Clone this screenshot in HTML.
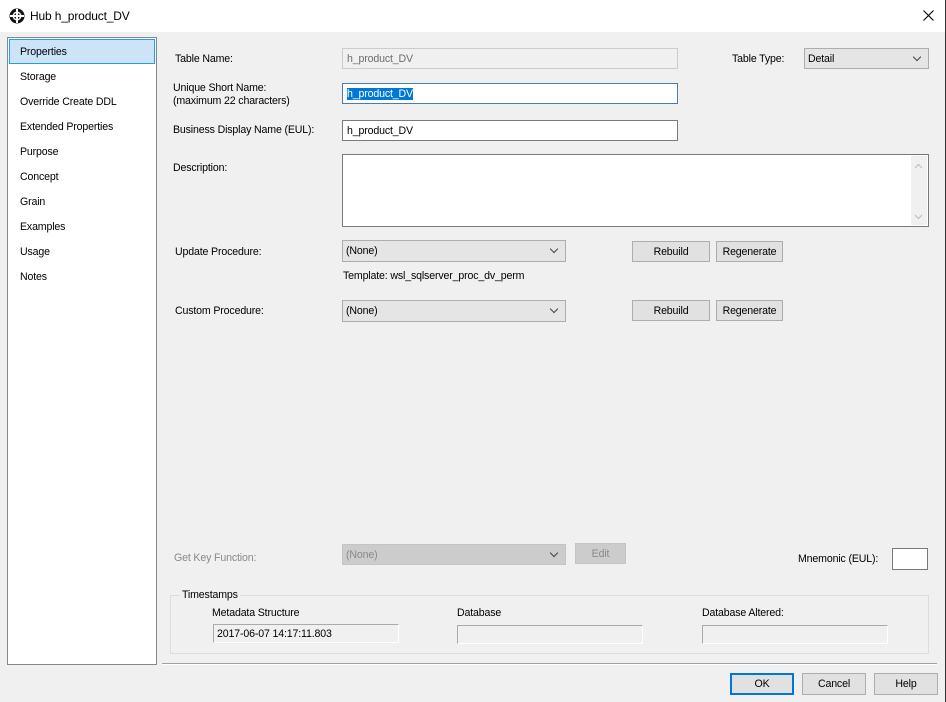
<!DOCTYPE html>
<html><head><meta charset="utf-8"><style>
*{box-sizing:border-box;margin:0;padding:0}
body{width:946px;height:702px;overflow:hidden;background:#f0f0f0;font-family:"Liberation Sans",sans-serif;font-size:10.6px;letter-spacing:-0.15px;color:#000;position:relative}
.a{position:absolute;white-space:nowrap}
.tb{position:absolute;left:0;top:0;width:946px;height:32px;background:#fff}
.in{position:absolute;background:#fff;border:1px solid #7a7a7a;padding:4px 4px 2px;line-height:13px}
.dis{background:#f0f0f0;border-color:#ccc;color:#6d6d6d}
.cb{position:absolute;background:#e5e5e5;border:1px solid #adadad;padding:4px 3px 2px;line-height:13px}
.cb:after{content:"";position:absolute;right:8px;top:5px;width:5px;height:5px;border-right:1px solid #444;border-bottom:1px solid #444;transform:rotate(45deg)}
.btn{position:absolute;background:#e1e1e1;border:1px solid #adadad;text-align:center;line-height:20px}
</style></head><body>
<div class="tb"></div>
<div class="a" style="right:0;top:0;width:1px;height:702px;background:#333"></div>
<svg class="a" style="left:9px;top:8px" width="16" height="16" viewBox="0 0 16 16"><circle cx="8" cy="8" r="7.5" fill="#111"/><circle cx="8" cy="8" r="4.5" fill="#fff"/><circle cx="8" cy="8" r="3" fill="#111"/><rect x="7" y="1" width="2" height="14" fill="#fff"/><rect x="1" y="7" width="14" height="2" fill="#fff"/></svg>
<div class="a" style="left:30px;top:9px;font-size:12px">Hub h_product_DV</div>
<svg class="a" style="left:923px;top:10px" width="11" height="11"><path d="M0.5 0.5L10.5 10.5M10.5 0.5L0.5 10.5" stroke="#000" stroke-width="1.1"/></svg>

<div class="a" style="left:7px;top:37px;width:150px;height:628px;background:#fff;border:1px solid #828790"></div>
<div class="a" style="left:9px;top:39px;width:146px;height:25px;background:#cce4f7;border:1px solid #26a0da"></div>
<div class="a" style="left:20px;top:46px">Properties</div>
<div class="a" style="left:20px;top:71px">Storage</div>
<div class="a" style="left:20px;top:96px">Override Create DDL</div>
<div class="a" style="left:20px;top:121px">Extended Properties</div>
<div class="a" style="left:20px;top:146px">Purpose</div>
<div class="a" style="left:20px;top:171px">Concept</div>
<div class="a" style="left:20px;top:196px">Grain</div>
<div class="a" style="left:20px;top:221px">Examples</div>
<div class="a" style="left:20px;top:246px">Usage</div>
<div class="a" style="left:20px;top:271px">Notes</div>

<div class="a" style="left:175px;top:53px">Table Name:</div>
<div class="in dis" style="left:342px;top:48px;width:336px;height:21px">h_product_DV</div>
<div class="a" style="left:732px;top:53px">Table Type:</div>
<div class="cb" style="left:804px;top:48px;width:125px;height:21px">Detail</div>

<div class="a" style="left:173px;top:82px;line-height:13px">Unique Short Name:<br>(maximum 22 characters)</div>
<div class="in" style="left:342px;top:83px;width:336px;height:21px;border-color:#4a7dad"><span style="background:#0078d7;color:#fff">h_product_DV</span></div>
<div class="a" style="left:173px;top:124px">Business Display Name (EUL):</div>
<div class="in" style="left:342px;top:120px;width:336px;height:21px">h_product_DV</div>
<div class="a" style="left:173px;top:162px">Description:</div>
<div class="in" style="left:342px;top:154px;width:587px;height:73px"></div>
<div class="a" style="left:911px;top:156px;width:16px;height:69px;background:#f0f0f0"></div>
<svg class="a" style="left:914px;top:163px" width="9" height="6"><path d="M1 5L4.5 1.5L8 5" stroke="#bbb" fill="none"/></svg>
<svg class="a" style="left:914px;top:214px" width="9" height="6"><path d="M1 1L4.5 4.5L8 1" stroke="#bbb" fill="none"/></svg>

<div class="a" style="left:175px;top:246px">Update Procedure:</div>
<div class="cb" style="left:342px;top:240px;width:224px;height:22px">(None)</div>
<div class="btn" style="left:632px;top:241px;width:78px;height:21px">Rebuild</div>
<div class="btn" style="left:716px;top:241px;width:67px;height:21px">Regenerate</div>
<div class="a" style="left:343px;top:270px">Template: wsl_sqlserver_proc_dv_perm</div>
<div class="a" style="left:175px;top:305px">Custom Procedure:</div>
<div class="cb" style="left:342px;top:300px;width:224px;height:22px">(None)</div>
<div class="btn" style="left:632px;top:300px;width:78px;height:21px">Rebuild</div>
<div class="btn" style="left:716px;top:300px;width:67px;height:21px">Regenerate</div>

<div class="a" style="left:174px;top:552px;color:#8a8a8a">Get Key Function:</div>
<div class="cb" style="left:342px;top:544px;width:224px;height:21px;background:#ccc;border-color:#c4c4c4;color:#8a8a8a">(None)</div>
<div class="btn" style="left:575px;top:543px;width:51px;height:21px;background:#ccc;border-color:#c4c4c4;color:#8a8a8a">Edit</div>
<div class="a" style="left:798px;top:553px">Mnemonic (EUL):</div>
<div class="in" style="left:892px;top:548px;width:36px;height:22px"></div>

<div class="a" style="left:170px;top:595px;width:759px;height:59px;border:1px solid #dcdcdc"></div>
<div class="a" style="left:180px;top:589px;background:#f0f0f0;padding:0 2px">Timestamps</div>
<div class="a" style="left:212px;top:607px">Metadata Structure</div>
<div class="a" style="left:457px;top:607px">Database</div>
<div class="a" style="left:702px;top:607px">Database Altered:</div>
<div class="in" style="left:213px;top:624px;width:186px;height:19px;background:#f0f0f0;border-color:#aaa;padding:3px 3px 0;border-right-color:#fff;border-bottom-color:#fff">2017-06-07 14:17:11.803</div>
<div class="in" style="left:457px;top:625px;width:186px;height:19px;background:#f0f0f0;border-color:#aaa;border-right-color:#fff;border-bottom-color:#fff"></div>
<div class="in" style="left:702px;top:625px;width:186px;height:19px;background:#f0f0f0;border-color:#aaa;border-right-color:#fff;border-bottom-color:#fff"></div>

<div class="a" style="left:162px;top:663px;width:775px;height:2px;border-top:1px solid #a0a0a0;border-bottom:1px solid #fff"></div>
<div class="btn" style="left:730px;top:673px;width:64px;height:22px;border:2px solid #0078d7;line-height:19px">OK</div>
<div class="btn" style="left:802px;top:673px;width:64px;height:22px">Cancel</div>
<div class="btn" style="left:874px;top:673px;width:64px;height:22px">Help</div>
</body></html>
